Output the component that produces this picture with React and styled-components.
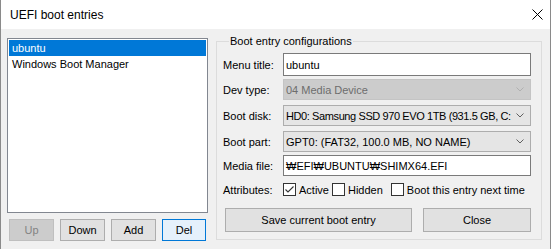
import React from 'react';
import styled, { createGlobalStyle } from 'styled-components';

const GlobalStyle = createGlobalStyle`
  html, body {
    margin: 0;
    padding: 0;
    background: #ffffff;
  }
  * {
    box-sizing: border-box;
  }
`;

const Window = styled.div`
  width: 551px;
  height: 249px;
  border-left: 1px solid #8a8a8a;
  border-right: 1px solid #8a8a8a;
  background: #f0f0f0;
  font-family: 'Liberation Sans', Arial, sans-serif;
  font-size: 11px;
  color: #000;
  display: flex;
  flex-direction: column;
  overflow: hidden;
`;

const TitleBar = styled.div`
  height: 29px;
  flex: none;
  background: #ffffff;
  display: flex;
  align-items: center;
  justify-content: space-between;
  padding: 0 7px 0 9px;
  font-size: 12px;
`;

const CloseGlyph = styled.svg`
  display: block;
`;

const Body = styled.div`
  flex: 1;
  display: flex;
  gap: 8px;
  padding: 4px 0 0 6px;
`;

const LeftColumn = styled.div`
  width: 201px;
  display: flex;
  flex-direction: column;
  gap: 6px;
  padding-top: 5px;
`;

const ListBox = styled.div`
  height: 175px;
  background: #ffffff;
  border: 1px solid #828790;
  padding: 1px;
`;

const ListItem = styled.div`
  height: 16px;
  line-height: 16px;
  padding-left: 3px;
  background: ${({ $selected }) => ($selected ? '#0078d7' : 'transparent')};
  color: ${({ $selected }) => ($selected ? '#ffffff' : '#000')};
`;

const ButtonRow = styled.div`
  display: flex;
  gap: 6px;
  padding: 0 2px;
`;

const Button = styled.button`
  font: inherit;
  height: ${({ $h }) => $h || 22}px;
  width: ${({ $w }) => $w}px;
  padding: 0;
  border: 1px solid;
  background: ${({ $focused, disabled }) =>
    disabled ? '#cccccc' : $focused ? '#e5f1fb' : '#e1e1e1'};
  color: ${({ disabled }) => (disabled ? '#838383' : '#000')};
  border-color: ${({ $focused, disabled }) =>
    disabled ? '#bfbfbf' : $focused ? '#0078d7' : '#adadad'};
`;

const GroupBox = styled.fieldset`
  width: 326px;
  height: 207px;
  margin: 0;
  padding: 4px 10px 0 6px;
  border: 1px solid #dcdcdc;
  min-width: 0;
  display: flex;
  flex-direction: column;
`;

const Legend = styled.legend`
  padding: 0 1px;
  margin-left: 6px;
  line-height: 16px;
`;

const FieldRow = styled.div`
  display: grid;
  grid-template-columns: 60px 1fr;
  align-items: center;
  height: ${({ $h }) => $h}px;
  margin-top: ${({ $mt }) => $mt || 0}px;
`;

const Label = styled.span`
  white-space: nowrap;
`;

const TextBox = styled.div`
  height: 100%;
  background: #ffffff;
  border: 1px solid #7a7a7a;
  padding-left: 2px;
  display: flex;
  align-items: center;
  white-space: nowrap;
  overflow: hidden;
`;

const Combo = styled.div`
  height: 100%;
  background: ${({ $disabled }) => ($disabled ? '#cccccc' : '#e5e5e5')};
  border: 1px solid ${({ $disabled }) => ($disabled ? '#c4c4c4' : '#adadad')};
  color: ${({ $disabled }) => ($disabled ? '#6d6d6d' : '#000')};
  display: flex;
  align-items: center;
  padding: 0 0 0 2px;
  min-width: 0;
`;

const ComboText = styled.span`
  flex: 1;
  min-width: 0;
  white-space: nowrap;
  letter-spacing: ${({ $tight }) => ($tight ? '-0.4px' : 'normal')};
`;

const ComboArrow = styled.svg`
  flex: none;
  margin: 0 6px 0 2px;
`;

const AttrRow = styled.div`
  display: flex;
  align-items: center;
  height: 17px;
  margin-top: 5px;
`;

const AttrLabel = styled.span`
  width: 60px;
  flex: none;
`;

const CheckLabel = styled.label`
  display: flex;
  align-items: center;
  gap: 3px;
  margin-right: ${({ $mr }) => $mr || 0}px;
  white-space: nowrap;
`;

const Box = styled.span`
  width: 13px;
  height: 13px;
  flex: none;
  border: 1px solid #333333;
  background: #ffffff;
  display: flex;
  align-items: center;
  justify-content: center;
`;

const ActionRow = styled.div`
  display: flex;
  justify-content: space-between;
  margin-top: 10px;
  padding-left: 2px;
`;

function ComboBox({ value, disabled, tight }) {
  return (
    <Combo $disabled={disabled}>
      <ComboText $tight={tight}>{value}</ComboText>
      <ComboArrow width="8" height="5" viewBox="0 0 8 5">
        <path
          d="M0.5 0.5 L4 4 L7.5 0.5"
          fill="none"
          stroke={disabled ? '#b0b0b0' : '#606060'}
          strokeWidth="1"
        />
      </ComboArrow>
    </Combo>
  );
}

function CheckBox({ checked, children, mr }) {
  return (
    <CheckLabel $mr={mr}>
      <Box>
        {checked && (
          <svg width="11" height="11" viewBox="0 0 11 11">
            <path d="M1.5 5.5 L4 8 L9.5 2.5" fill="none" stroke="#333" strokeWidth="1.1" />
          </svg>
        )}
      </Box>
      {children}
    </CheckLabel>
  );
}

export default function App() {
  return (
    <>
      <GlobalStyle />
      <Window>
        <TitleBar>
          <span>UEFI boot entries</span>
          <CloseGlyph width="11" height="11" viewBox="0 0 11 11">
            <path d="M0.5 0.5 L10.5 10.5 M10.5 0.5 L0.5 10.5" stroke="#000" strokeWidth="1" />
          </CloseGlyph>
        </TitleBar>
        <Body>
          <LeftColumn>
            <ListBox>
              <ListItem $selected>ubuntu</ListItem>
              <ListItem>Windows Boot Manager</ListItem>
            </ListBox>
            <ButtonRow>
              <Button $w={45} disabled>Up</Button>
              <Button $w={45}>Down</Button>
              <Button $w={45}>Add</Button>
              <Button $w={44} $focused>Del</Button>
            </ButtonRow>
          </LeftColumn>
          <GroupBox>
            <Legend>Boot entry configurations</Legend>
            <FieldRow $h={23}>
              <Label>Menu title:</Label>
              <TextBox>ubuntu</TextBox>
            </FieldRow>
            <FieldRow $h={21} $mt={3}>
              <Label>Dev type:</Label>
              <ComboBox value="04  Media Device" disabled />
            </FieldRow>
            <FieldRow $h={21} $mt={5}>
              <Label>Boot disk:</Label>
              <ComboBox value="HD0: Samsung SSD 970 EVO 1TB (931.5 GB, C:" tight />
            </FieldRow>
            <FieldRow $h={21} $mt={5}>
              <Label>Boot part:</Label>
              <ComboBox value="GPT0: (FAT32, 100.0 MB, NO NAME)" />
            </FieldRow>
            <FieldRow $h={21} $mt={3}>
              <Label>Media file:</Label>
              <TextBox>₩EFI₩UBUNTU₩SHIMX64.EFI</TextBox>
            </FieldRow>
            <AttrRow>
              <AttrLabel>Attributes:</AttrLabel>
              <CheckBox checked mr={3}>Active</CheckBox>
              <CheckBox mr={8}>Hidden</CheckBox>
              <CheckBox>Boot this entry next time</CheckBox>
            </AttrRow>
            <ActionRow>
              <Button $w={187} $h={24}>Save current boot entry</Button>
              <Button $w={108} $h={24}>Close</Button>
            </ActionRow>
          </GroupBox>
        </Body>
      </Window>
    </>
  );
}
